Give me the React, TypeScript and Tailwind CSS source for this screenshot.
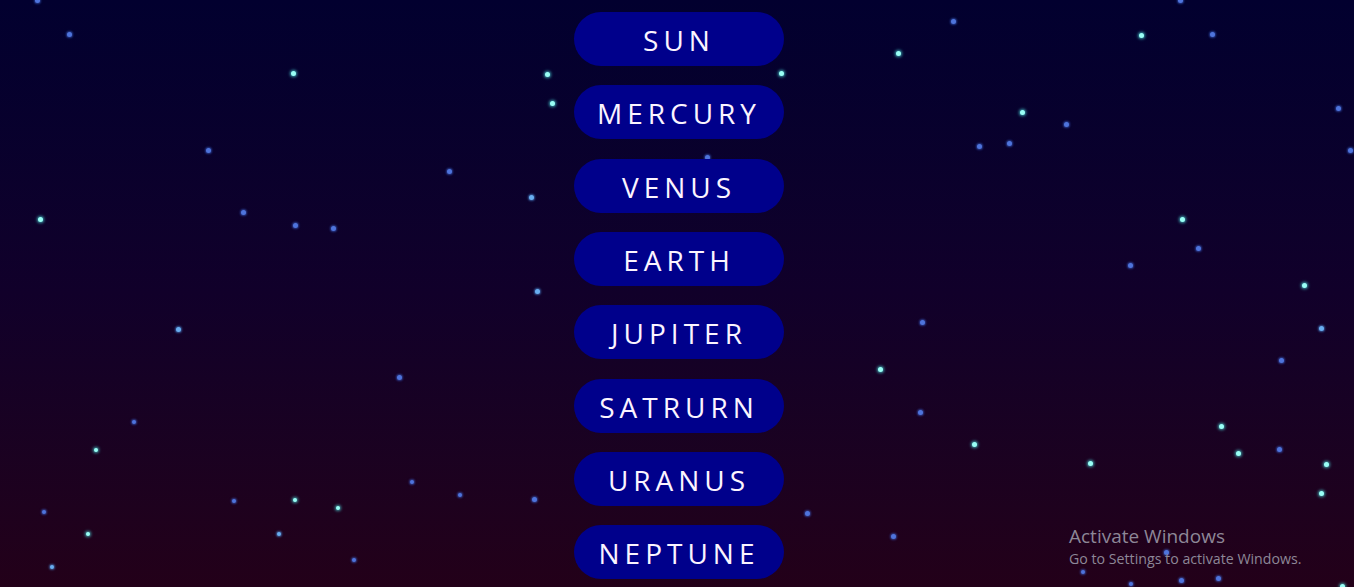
const planets = ['SUN', 'MERCURY', 'VENUS', 'EARTH', 'JUPITER', 'SATRURN', 'URANUS', 'NEPTUNE'];

type Star = [number, number, 'c' | 'b' | 'l', number?];

// star field: x, y, colour (c = cyan, b = blue, l = light blue), size
const stars: Star[] = [
  [37, 0, 'b'], [69, 34, 'b'], [293, 73, 'c'], [208, 150, 'b'], [40, 219, 'c'],
  [243, 212, 'b'], [295, 225, 'b'], [333, 228, 'b'],
  [547, 74, 'c'], [552, 103, 'c'], [449, 171, 'b'], [531, 197, 'l'], [537, 291, 'l'],
  [781, 73, 'c'], [707, 157, 'b'],
  [178, 329, 'l'], [399, 377, 'b'], [134, 422, 'b', 3.5], [96, 450, 'c', 3.5],
  [412, 482, 'b', 3.5], [460, 495, 'b', 3.5], [534, 499, 'b'], [234, 501, 'b', 3.5],
  [295, 500, 'c', 4], [338, 508, 'c', 4], [44, 512, 'b', 3.5], [88, 534, 'c', 4],
  [279, 534, 'l', 4], [354, 560, 'b', 3.5], [52, 567, 'l', 4],
  [922, 322, 'b'], [880, 369, 'c'], [920, 412, 'b'], [974, 444, 'c'], [807, 513, 'b'],
  [893, 536, 'b'], [1321, 328, 'l'], [1281, 360, 'b'], [1221, 426, 'c'], [1238, 453, 'c'],
  [1279, 449, 'b'], [1326, 464, 'c'], [1321, 493, 'c'], [1090, 463, 'c'],
  [1166, 552, 'b'], [1083, 572, 'b', 3.5], [1131, 584, 'b', 3.5], [1181, 580, 'b'],
  [1218, 578, 'b'], [1342, 586, 'c'],
  [1180, 0, 'b'], [953, 21, 'b'], [898, 53, 'c'], [1141, 35, 'c'], [1212, 34, 'b'],
  [1338, 108, 'b'], [1350, 150, 'b'], [1022, 112, 'c'], [1066, 124, 'b'],
  [979, 146, 'b'], [1009, 143, 'b'], [1182, 219, 'c'], [1198, 248, 'b'],
  [1130, 265, 'b'], [1304, 285, 'c'],
];

const starColor = {
  c: 'bg-[#9afff6] shadow-[0_0_3px_1px_rgba(80,230,230,0.7)]',
  b: 'bg-[#4f74dc] shadow-[0_0_2px_1px_rgba(60,100,210,0.6)]',
  l: 'bg-[#69aef0] shadow-[0_0_2px_1px_rgba(80,150,230,0.6)]',
};

function StarField() {
  return (
    <div className="absolute inset-0">
      {stars.map(([x, y, c, s = 5], i) => (
        <span
          key={i}
          className={`absolute rounded-full ${starColor[c]}`}
          style={{ left: x - s / 2, top: y - s / 2, width: s, height: s }}
        />
      ))}
    </div>
  );
}

export default function App() {
  return (
    <div className="relative h-[587px] w-full overflow-hidden bg-linear-to-b from-[#02002f] via-[#11002a] to-[#230019] font-['Open_Sans',sans-serif]">
      <StarField />

      <div className="relative flex flex-col items-center gap-[19.33px] pt-3 pl-1">
        {planets.map((p) => (
          <button
            key={p}
            className="flex h-[54px] w-[210px] items-center justify-center rounded-full bg-[#00008b] pt-[2px] text-[28px] tracking-[5px] text-[#fbf4ff]"
          >
            {p}
          </button>
        ))}
      </div>

      <div className="absolute left-[1069px] top-[524px] text-[#8d8797]">
        <div className="text-[19px] leading-[25px]">Activate Windows</div>
        <div className="text-[14.2px] leading-[20px]">Go to Settings to activate Windows.</div>
      </div>
    </div>
  );
}
